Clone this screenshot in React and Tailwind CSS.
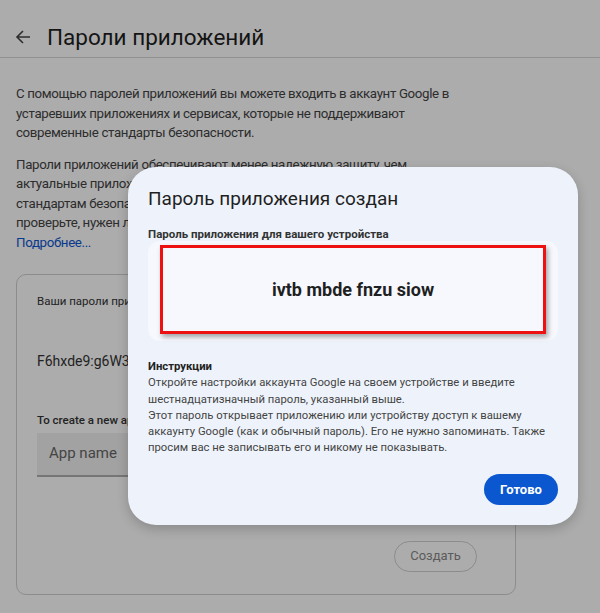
import React from "react";

const font = { fontFamily: "Roboto, 'Open Sans', sans-serif" };

const App = () => {
  return (
    <div className="relative w-[600px] h-[613px] overflow-hidden bg-white text-[#1f1f1f]" style={font}>
      {/* page behind the dialog */}
      <div className="h-[58px] border-b border-[#d6d6d6] flex items-center pt-[16px] px-[15px] gap-[16px]">
        <svg width="16" height="16" viewBox="0 0 16 16" fill="none" stroke="#444" strokeWidth="1.6">
          <path d="M15 8H2M8 2L2 8l6 6" />
        </svg>
        <h1 className="text-[22.5px] leading-[30px] text-[#1f1f1f]">Пароли приложений</h1>
      </div>

      <div className="px-4 pt-[26px] text-[13.3px] tracking-[-0.35px] leading-[19.5px] text-[#444]">
        <p className="whitespace-nowrap">
          С помощью паролей приложений вы можете входить в аккаунт Google в
          <br />
          устаревших приложениях и сервисах, которые не поддерживают
          <br />
          современные стандарты безопасности.
        </p>
        <p className="mt-[12px] whitespace-nowrap">
          Пароли приложений обеспечивают менее надежную защиту, чем
          <br />
          актуальные приложения и сервисы, которые соответствуют современным
          <br />
          стандартам безопасности. Прежде чем создавать пароль приложения,
          <br />
          проверьте, нужен ли он для входа в приложение.
          <br />
          <span className="text-[#0b57d0]">Подробнее...</span>
        </p>

        <div className="mt-[22px] w-[500px] h-[321px] border border-[#d0d0d0] rounded-[10px] px-[20px] pt-[17px] flex flex-col tracking-normal">
          <div className="whitespace-nowrap text-[11.5px] text-[#333]">Ваши пароли приложений</div>
          <div className="mt-[40px] text-[14px] text-[#333]">F6hxde9:g6W3</div>
          <div className="mt-[40px] whitespace-nowrap text-[11.5px] font-medium text-[#333]">To create a new app specific password, type a name for it below...</div>
          <div className="mt-[2px] w-[420px] h-[44px] bg-[#f1f1f1] border-b-2 border-[#b0b0b0] flex items-center px-[12px] text-[15px] text-[#666]">
            App name
          </div>
          <div className="flex justify-end pr-[18px] mt-[64px]">
            <div className="h-[31px] w-[83px] rounded-full border border-[#d0d0d0] flex items-center justify-center text-[13px] text-[#888]">
              Создать
            </div>
          </div>
        </div>
      </div>

      {/* scrim */}
      <div className="absolute inset-0 bg-black/[0.325]" />

      {/* dialog */}
      <div className="absolute left-[128px] top-[167px] w-[450px] h-[358px] rounded-[28px] bg-[#eef3fb] shadow-[0_4px_12px_rgba(0,0,0,0.2)] px-[20px] pt-[19px] flex flex-col">
        <h2 className="text-[19px] leading-[26px] text-[#1f1f1f]">Пароль приложения создан</h2>
        <div className="mt-[15px] text-[11.5px] leading-[14px] font-bold text-[#333]">
          Пароль приложения для вашего устройства
        </div>
        <div className="h-[100px] rounded-[12px] bg-[#f6f8fd] px-[12px] pt-[4px]">
          <div className="h-[89px] border-[3px] border-[#ee1111] shadow-[2px_3px_5px_rgba(0,0,0,0.35)] flex items-center justify-center">
            <span className="text-[18px] font-bold text-[#1f1f1f]">ivtb mbde fnzu siow</span>
          </div>
        </div>
        <div className="mt-[18px] text-[11.3px] leading-[16.3px] text-[#444]">
          <div className="font-bold text-[#222]">Инструкции</div>
          <div className="whitespace-nowrap">
            Откройте настройки аккаунта Google на своем устройстве и введите
            <br />
            шестнадцатизначный пароль, указанный выше.
            <br />
            Этот пароль открывает приложению или устройству доступ к вашему
            <br />
            аккаунту Google (как и обычный пароль). Его не нужно запоминать. Также
            <br />
            просим вас не записывать его и никому не показывать.
          </div>
        </div>
        <div className="flex justify-end mt-[17px]">
          <button className="h-[31px] w-[74px] rounded-full bg-[#0b57d0] text-white text-[13px] font-bold">
            Готово
          </button>
        </div>
      </div>
    </div>
  );
};

export default App;
